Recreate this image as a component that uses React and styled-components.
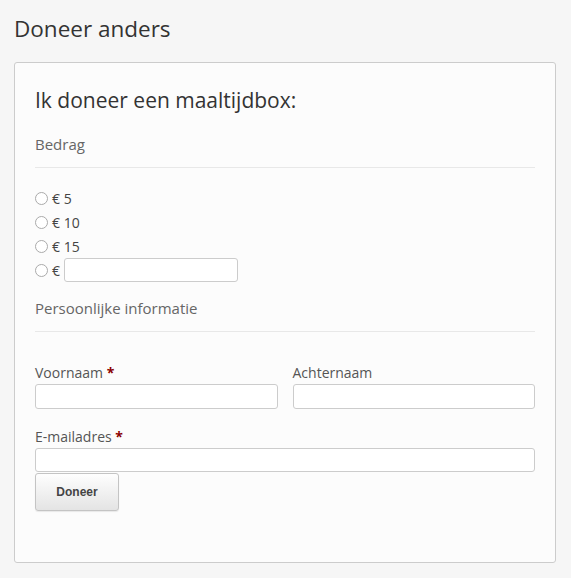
import React from 'react'
import styled, {createGlobalStyle} from 'styled-components'

const Global = createGlobalStyle`
  html, body {
    margin: 0;
    background: #f6f6f6;
    font-family: "Open Sans", "Liberation Sans", sans-serif;
    color: #444;
  }
`

const Page = styled.div`
  padding: 13px 15px 16px 14px;
  width: 571px;
  box-sizing: border-box;
`

const Title = styled.h2`
  margin: 0 0 17px;
  font-size: 22.5px;
  font-weight: 400;
  line-height: 32px;
  color: #333;
`

const Box = styled.div`
  background: #fcfcfc;
  border: 1px solid #ccc;
  border-radius: 3px;
  padding: 22px 20px 51px 20px;
`

const FormTitle = styled.h3`
  margin: 0 0 18px;
  font-size: 21px;
  font-weight: 400;
  line-height: 30px;
  color: #333;
`

const Section = styled.div`
  font-size: 15px;
  color: #666;
  line-height: 22px;
  padding-bottom: 12px;
  border-bottom: 1px solid #e8e8e8;
  margin-bottom: ${p => p.$gap}px;
`

const Options = styled.div`
  display: flex;
  flex-direction: column;
  gap: 4px;
  margin-bottom: 17px;
`

const Option = styled.label`
  display: flex;
  align-items: center;
  height: 20px;
  font-size: 14px;
  color: #444;
  gap: 2px;
`

const Radio = styled.span`
  width: 11px;
  height: 11px;
  border: 1px solid #aaa;
  border-radius: 50%;
  background: #fff;
  margin-right: 2px;
`

const Input = styled.input`
  box-sizing: border-box;
  height: ${p => p.$h || 25}px;
  width: ${p => p.$w || '100%'};
  border: 1px solid #ccc;
  border-radius: 3px;
  background: #fff;
  margin: 0 0 0 ${p => p.$ml || 0}px;
  padding: 2px 6px;
  font: inherit;
`

const Row = styled.div`
  display: grid;
  grid-template-columns: 1fr 1fr;
  gap: 15px;
  margin-bottom: 18px;
`

const Field = styled.div`
  display: flex;
  flex-direction: column;
`

const Label = styled.div`
  font-size: 14px;
  line-height: 20px;
  margin-bottom: 1px;
  color: #555;
`

const Req = styled.span`
  color: #8b0000;
  font-weight: 700;
`

const Button = styled.button`
  margin-top: 1px;
  width: 84px;
  height: 38px;
  border: 1px solid #c4c4c4;
  border-radius: 3px;
  background: linear-gradient(#fefefe, #e4e4e4);
  font-family: "Liberation Sans", Arial, sans-serif;
  font-weight: 700;
  font-size: 12px;
  color: #444;
  box-shadow: 0 1px 1px rgba(0,0,0,0.08);
`

const amounts = ['5', '10', '15']

const App = () => {
  return (
    <Page>
      <Global />
      <Title>Doneer anders</Title>
      <Box>
        <FormTitle>Ik doneer een maaltijdbox:</FormTitle>
        <Section $gap={20}>Bedrag</Section>
        <Options>
          {amounts.map(a => (
            <Option key={a}><Radio />€ {a}</Option>
          ))}
          <Option><Radio />€ <Input $w="174px" $h={24} $ml={2} /></Option>
        </Options>
        <Section $gap={31}>Persoonlijke informatie</Section>
        <Row>
          <Field>
            <Label>Voornaam <Req>*</Req></Label>
            <Input />
          </Field>
          <Field>
            <Label>Achternaam</Label>
            <Input />
          </Field>
        </Row>
        <Field>
          <Label>E-mailadres <Req>*</Req></Label>
          <Input $h={24} />
        </Field>
        <Button>Doneer</Button>
      </Box>
    </Page>
  )
}

export default App
